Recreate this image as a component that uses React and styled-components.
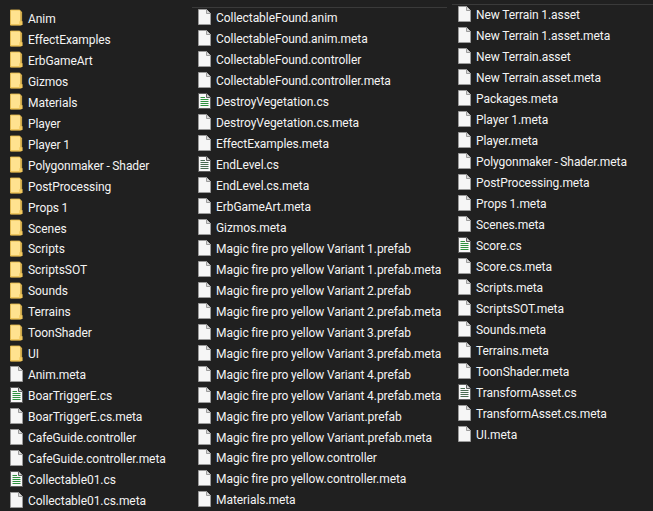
import React from 'react'
import styled, { createGlobalStyle } from 'styled-components'

const GlobalStyle = createGlobalStyle`
  html, body {
    margin: 0;
    padding: 0;
    background: #202020;
    overflow: hidden;
  }
`

const columns = [
  {
    width: 192,
    top: 7.5,
    rule: false,
    items: [
      ['d', 'Anim'], ['d', 'EffectExamples'], ['d', 'ErbGameArt'], ['d', 'Gizmos'], ['d', 'Materials'],
      ['d', 'Player'], ['d', 'Player 1'], ['d', 'Polygonmaker - Shader'], ['d', 'PostProcessing'],
      ['d', 'Props 1'], ['d', 'Scenes'], ['d', 'Scripts'], ['d', 'ScriptsSOT'], ['d', 'Sounds'],
      ['d', 'Terrains'], ['d', 'ToonShader'], ['d', 'UI'], ['f', 'Anim.meta'], ['c', 'BoarTriggerE.cs'],
      ['f', 'BoarTriggerE.cs.meta'], ['f', 'CafeGuide.controller'], ['f', 'CafeGuide.controller.meta'],
      ['c', 'Collectable01.cs'], ['f', 'Collectable01.cs.meta'],
    ],
  },
  {
    width: 255,
    top: 7,
    rule: true,
    items: [
      ['f', 'CollectableFound.anim'], ['f', 'CollectableFound.anim.meta'], ['f', 'CollectableFound.controller'],
      ['f', 'CollectableFound.controller.meta'], ['c', 'DestroyVegetation.cs'], ['f', 'DestroyVegetation.cs.meta'],
      ['f', 'EffectExamples.meta'], ['g', 'EndLevel.cs'], ['f', 'EndLevel.cs.meta'], ['f', 'ErbGameArt.meta'],
      ['f', 'Gizmos.meta'], ['f', 'Magic fire pro yellow Variant 1.prefab'],
      ['f', 'Magic fire pro yellow Variant 1.prefab.meta'], ['f', 'Magic fire pro yellow Variant 2.prefab'],
      ['f', 'Magic fire pro yellow Variant 2.prefab.meta'], ['f', 'Magic fire pro yellow Variant 3.prefab'],
      ['f', 'Magic fire pro yellow Variant 3.prefab.meta'], ['f', 'Magic fire pro yellow Variant 4.prefab'],
      ['f', 'Magic fire pro yellow Variant 4.prefab.meta'], ['f', 'Magic fire pro yellow Variant.prefab'],
      ['f', 'Magic fire pro yellow Variant.prefab.meta'], ['f', 'Magic fire pro yellow.controller'],
      ['f', 'Magic fire pro yellow.controller.meta'], ['f', 'Materials.meta'],
    ],
  },
  {
    width: 201,
    top: 4,
    rule: true,
    items: [
      ['f', 'New Terrain 1.asset'], ['f', 'New Terrain 1.asset.meta'], ['f', 'New Terrain.asset'],
      ['f', 'New Terrain.asset.meta'], ['f', 'Packages.meta'], ['f', 'Player 1.meta'], ['f', 'Player.meta'],
      ['f', 'Polygonmaker - Shader.meta'], ['f', 'PostProcessing.meta'], ['f', 'Props 1.meta'], ['f', 'Scenes.meta'],
      ['c', 'Score.cs'], ['f', 'Score.cs.meta'], ['f', 'Scripts.meta'], ['f', 'ScriptsSOT.meta'], ['f', 'Sounds.meta'],
      ['f', 'Terrains.meta'], ['f', 'ToonShader.meta'], ['g', 'TransformAsset.cs'], ['f', 'TransformAsset.cs.meta'],
      ['f', 'UI.meta'],
    ],
  },
]

const FolderIcon = () => (
  <svg width="14" height="17" viewBox="0 0 14 17">
    <path d="M0.5 0.5H10.5L11.5 2V16.5H0.5Z" fill="#ffe28f" stroke="#e8bd50" />
    <path d="M11.5 2.5H12.5V16.5H0.5" fill="none" stroke="#e8bd50" />
    <path d="M10 12.5H13.5V16.5H10Z" fill="#f3c95f" />
  </svg>
)

const FileIcon = () => (
  <svg width="13" height="16" viewBox="0 0 13 16">
    <path d="M0.5 0.5H8.5L12.5 4.5V15.5H0.5Z" fill="#f6f6f6" stroke="#9b9b9b" />
    <path d="M8.5 0.5V4.5H12.5" fill="#d8d8d8" stroke="#9b9b9b" />
  </svg>
)

const ScriptIcon = ({ line }) => (
  <svg width="13" height="16" viewBox="0 0 13 16">
    <path d="M0.5 0.5H8.5L12.5 4.5V15.5H0.5Z" fill="#f8f8f8" stroke="#5f5f5f" />
    <path d="M8.5 0.5V4.5H12.5" fill="#cfcfcf" stroke="#5f5f5f" />
    <path d="M2.5 4.5H7M2.5 6.5H10.5M2.5 8.5H10.5M2.5 10.5H10.5M2.5 12.5H10.5" stroke={line} />
  </svg>
)

const renderIcon = kind => {
  if (kind === 'd') return <FolderIcon />
  if (kind === 'c') return <ScriptIcon line="#2f9140" />
  if (kind === 'g') return <ScriptIcon line="#4a6b52" />
  return <FileIcon />
}

const App = () => (
  <>
    <GlobalStyle />
    <Page>
      {columns.map((col, i) => (
        <Column key={i} $width={col.width} $top={col.top} $inset={col.rule ? 6 : 10}>
          {col.rule && <Rule />}
          {col.items.map(([kind, name]) => (
            <Row key={name}>
              <IconSlot>{renderIcon(kind)}</IconSlot>
              <Name>{name}</Name>
            </Row>
          ))}
        </Column>
      ))}
    </Page>
  </>
)

const Page = styled.div`
  display: flex;
  gap: 5px;
  height: 511px;
  width: 653px;
  overflow: hidden;
  background: #202020;
`

const Column = styled.div`
  box-sizing: border-box;
  flex: none;
  width: ${p => p.$width}px;
  margin-top: ${p => p.$top}px;
  padding-left: ${p => p.$inset}px;
  &:first-child {
    margin-right: -5px;
  }
`

const Rule = styled.div`
  height: 1px;
  margin: 0 0 -1px -6px;
  background: #3a3a3a;
`

const Row = styled.div`
  display: flex;
  align-items: center;
  height: 20.96px;
  gap: 5px;
`

const IconSlot = styled.span`
  display: flex;
  flex: none;
  width: 13px;
`

const Name = styled.span`
  padding-top: 2px;
  font-family: Roboto, "Noto Sans", sans-serif;
  font-size: 12px;
  letter-spacing: -0.06px;
  word-spacing: -0.3px;
  color: #f4f4f4;
  white-space: nowrap;
`

export default App
